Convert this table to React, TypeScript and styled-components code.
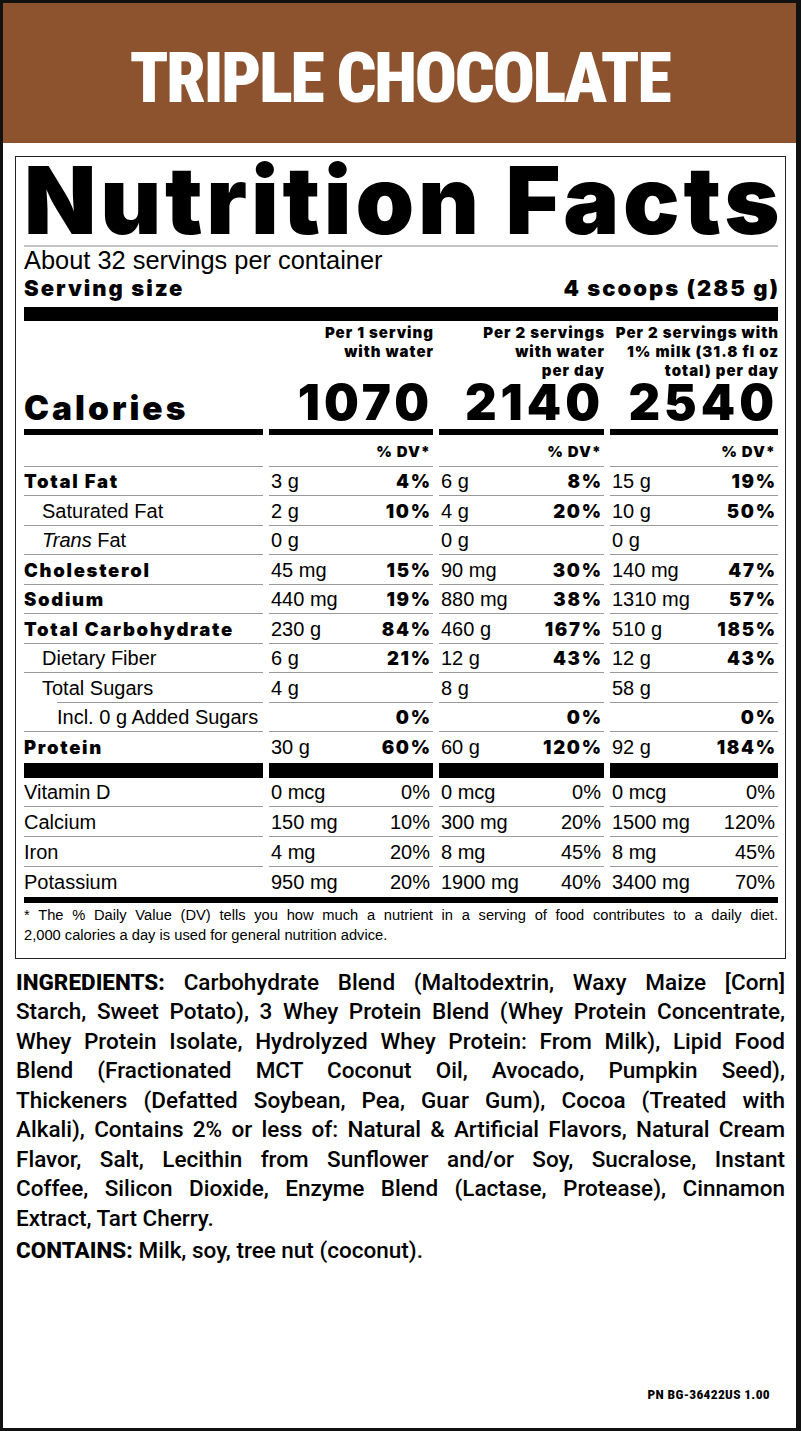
import React from "react";
import styled, { createGlobalStyle } from "styled-components";

const GlobalStyle = createGlobalStyle`
  html, body { margin: 0; padding: 0; background: #fff; }
  * { box-sizing: border-box; }
`;

const HEAVY = `"Inter", "Liberation Sans", Arial, sans-serif`;
const REG = `"Liberation Sans", Arial, sans-serif`;
const COND = `"Roboto Condensed", "Liberation Sans", Arial, sans-serif`;
const TEXT = `"Roboto", "Liberation Sans", Arial, sans-serif`;

const Page = styled.div`
  width: 801px;
  height: 1431px;
  border-style: solid;
  border-color: #111;
  border-width: 3px 5px 3px 3px;
  display: flex;
  flex-direction: column;
  font-family: ${REG};
  color: #000;
  background: #fff;
`;

const Header = styled.header`
  height: 140px;
  background: #8c532e;
  padding-top: 40px;
  text-align: center;
`;

const Title = styled.h1`
  margin: 0;
  font-family: ${COND};
  font-weight: 900;
  font-size: 70px;
  line-height: 70px;
  letter-spacing: -2.2px;
  color: #fff;
  white-space: nowrap;
`;

const Panel = styled.section`
  margin: 13px 10px 0 12px;
  border: 1px solid #222;
  padding: 0 7px 13px 8px;
`;

const BigTitle = styled.h2`
  margin: 0;
  font-family: ${HEAVY};
  font-weight: 900;
  font-size: 94px;
  line-height: 87.6px;
  letter-spacing: 3.8px;
  white-space: nowrap;
  border-bottom: 2px solid #c4c4c4;
`;

const Servings = styled.div`
  font-size: 25.4px;
  line-height: 27px;
  white-space: nowrap;
`;

const ServingSize = styled.div`
  display: flex;
  justify-content: space-between;
  font-family: ${HEAVY};
  font-weight: 900;
  font-size: 22px;
  line-height: 28.8px;
  letter-spacing: 2px;
  white-space: nowrap;
  & > span:last-child {
    margin-right: -2px;
  }
`;

const Bar = styled.div<{ $h: number; $mt?: number }>`
  height: ${(p) => p.$h}px;
  margin-top: ${(p) => p.$mt ?? 0}px;
  background: #000;
`;

const Grid = styled.div`
  display: grid;
  grid-template-columns: 239px 164px 165px 168px;
  column-gap: 6px;
`;

const SegBar = styled(Grid)<{ $h: number; $mt?: number }>`
  margin-top: ${(p) => p.$mt ?? 0}px;
  & > div {
    height: ${(p) => p.$h}px;
    background: #000;
  }
`;

const ColHeads = styled(Grid)`
  padding-top: 2px;
  font-family: ${HEAVY};
  font-weight: 900;
  font-size: 15px;
  line-height: 19.2px;
  letter-spacing: 1px;
`;

const ColHead = styled.div`
  text-align: right;
  white-space: nowrap;
  margin-right: -1px;
`;

const CaloriesRow = styled(Grid)`
  align-items: baseline;
`;

const CalLabel = styled.div`
  font-family: ${HEAVY};
  font-weight: 900;
  font-size: 33.5px;
  line-height: 30px;
  letter-spacing: 3px;
  white-space: nowrap;
`;

const CalValue = styled.div`
  font-family: ${HEAVY};
  font-weight: 900;
  font-size: 49px;
  line-height: 44px;
  letter-spacing: 4px;
  text-align: right;
  white-space: nowrap;
`;

const Row = styled(Grid)<{ $h: number }>`
  height: ${(p) => p.$h}px;
`;

const Cell = styled.div<{ $line?: boolean; $inset?: number; $pt: number }>`
  height: 100%;
  padding-top: ${(p) => p.$pt}px;
  line-height: 27px;
  white-space: nowrap;
  background-image: ${(p) =>
    p.$line ? "linear-gradient(#9a9a9a, #9a9a9a)" : "none"};
  background-repeat: no-repeat;
  background-position: right bottom;
  background-size: calc(100% - ${(p) => p.$inset ?? 0}px) 1px;
`;

const Label = styled(Cell)<{ $bold?: boolean; $indent?: number }>`
  padding-left: ${(p) => p.$indent ?? 0}px;
  font-family: ${(p) => (p.$bold ? HEAVY : REG)};
  font-weight: ${(p) => (p.$bold ? 900 : 400)};
  font-size: ${(p) => (p.$bold ? 18.5 : 20)}px;
  letter-spacing: ${(p) => (p.$bold ? 1.7 : 0)}px;
`;

const ValueCell = styled(Cell)`
  display: flex;
  justify-content: space-between;
  align-items: baseline;
  padding-left: 2px;
  padding-right: 3px;
`;

const DvHead = styled(Cell)`
  text-align: right;
  padding-right: 2px;
  line-height: 28px;
  font-family: ${HEAVY};
  font-weight: 900;
  font-size: 15px;
  letter-spacing: 1px;
`;

const Amount = styled.span`
  font-family: ${REG};
  font-size: 20px;
`;

const Pct = styled.span<{ $bold?: boolean }>`
  font-family: ${(p) => (p.$bold ? HEAVY : REG)};
  font-weight: ${(p) => (p.$bold ? 900 : 400)};
  font-size: ${(p) => (p.$bold ? 18.5 : 20)}px;
  letter-spacing: ${(p) => (p.$bold ? 1.7 : 0)}px;
  margin-right: ${(p) => (p.$bold ? -1.7 : 0)}px;
`;

const Footnote = styled.div`
  padding-top: 2px;
  font-size: 14.7px;
  line-height: 20px;
`;

const FootLine = styled.p<{ $justify?: boolean }>`
  margin: 0;
  white-space: nowrap;
  text-align: ${(p) => (p.$justify ? "justify" : "left")};
  text-align-last: ${(p) => (p.$justify ? "justify" : "left")};
`;

const Ingredients = styled.div`
  margin: 8.4px 11px 0 13px;
  font-family: ${TEXT};
  font-weight: 500;
  font-stretch: 92%;
  font-size: 22.5px;
  line-height: 29.5px;
`;

const IngLine = styled.div<{ $last?: boolean; $mt?: number }>`
  white-space: nowrap;
  text-align: justify;
  text-align-last: ${(p) => (p.$last ? "left" : "justify")};
  margin-top: ${(p) => p.$mt ?? 0}px;
`;

const Strong = styled.strong`
  font-weight: 800;
  font-stretch: 100%;
`;

const PartNo = styled.div`
  margin-top: auto;
  align-self: flex-end;
  margin-right: 26px;
  margin-bottom: 26px;
  font-family: ${COND};
  font-weight: 800;
  font-size: 13.5px;
  line-height: 16px;
  letter-spacing: 0.3px;
`;

type Nutrient = {
  label: React.ReactNode;
  bold?: boolean;
  indent?: number;
  inset?: number;
  vals: [string, string][];
};

const nutrients: Nutrient[] = [
  { label: "Total Fat", bold: true, vals: [["3 g", "4%"], ["6 g", "8%"], ["15 g", "19%"]] },
  { label: "Saturated Fat", indent: 18, vals: [["2 g", "10%"], ["4 g", "20%"], ["10 g", "50%"]] },
  {
    label: (
      <>
        <i>Trans</i> Fat
      </>
    ),
    indent: 18,
    vals: [["0 g", ""], ["0 g", ""], ["0 g", ""]],
  },
  { label: "Cholesterol", bold: true, vals: [["45 mg", "15%"], ["90 mg", "30%"], ["140 mg", "47%"]] },
  { label: "Sodium", bold: true, vals: [["440 mg", "19%"], ["880 mg", "38%"], ["1310 mg", "57%"]] },
  { label: "Total Carbohydrate", bold: true, vals: [["230 g", "84%"], ["460 g", "167%"], ["510 g", "185%"]] },
  { label: "Dietary Fiber", indent: 18, vals: [["6 g", "21%"], ["12 g", "43%"], ["12 g", "43%"]] },
  { label: "Total Sugars", indent: 18, inset: 33, vals: [["4 g", ""], ["8 g", ""], ["58 g", ""]] },
  { label: "Incl. 0 g Added Sugars", indent: 33, vals: [["", "0%"], ["", "0%"], ["", "0%"]] },
  { label: "Protein", bold: true, vals: [["30 g", "60%"], ["60 g", "120%"], ["92 g", "184%"]] },
];

const vitamins: { label: string; vals: [string, string][] }[] = [
  { label: "Vitamin D", vals: [["0 mcg", "0%"], ["0 mcg", "0%"], ["0 mcg", "0%"]] },
  { label: "Calcium", vals: [["150 mg", "10%"], ["300 mg", "20%"], ["1500 mg", "120%"]] },
  { label: "Iron", vals: [["4 mg", "20%"], ["8 mg", "45%"], ["8 mg", "45%"]] },
  { label: "Potassium", vals: [["950 mg", "20%"], ["1900 mg", "40%"], ["3400 mg", "70%"]] },
];

const ingredientLines: React.ReactNode[] = [
  <>
    <Strong>INGREDIENTS:</Strong> Carbohydrate Blend (Maltodextrin, Waxy Maize [Corn]
  </>,
  "Starch, Sweet Potato), 3 Whey Protein Blend (Whey Protein Concentrate,",
  "Whey Protein Isolate, Hydrolyzed Whey Protein: From Milk), Lipid Food",
  "Blend (Fractionated MCT Coconut Oil, Avocado, Pumpkin Seed),",
  "Thickeners (Defatted Soybean, Pea, Guar Gum), Cocoa (Treated with",
  "Alkali), Contains 2% or less of: Natural & Artificial Flavors, Natural Cream",
  "Flavor, Salt, Lecithin from Sunflower and/or Soy, Sucralose, Instant",
  "Coffee, Silicon Dioxide, Enzyme Blend (Lactase, Protease), Cinnamon",
  "Extract, Tart Cherry.",
];

export default function App() {
  return (
    <Page>
      <GlobalStyle />
      <Header>
        <Title>TRIPLE CHOCOLATE</Title>
      </Header>

      <Panel>
        <BigTitle>Nutrition Facts</BigTitle>
        <Servings>About 32 servings per container</Servings>
        <ServingSize>
          <span>Serving size</span>
          <span>4 scoops (285 g)</span>
        </ServingSize>
        <Bar $h={14} $mt={4.6} />

        <ColHeads>
          <div />
          <ColHead>
            Per 1 serving
            <br />
            with water
          </ColHead>
          <ColHead>
            Per 2 servings
            <br />
            with water
            <br />
            per day
          </ColHead>
          <ColHead>
            Per 2 servings with
            <br />
            1% milk (31.8 fl oz
            <br />
            total) per day
          </ColHead>
        </ColHeads>

        <CaloriesRow>
          <CalLabel>Calories</CalLabel>
          <CalValue>1070</CalValue>
          <CalValue>2140</CalValue>
          <CalValue>2540</CalValue>
        </CaloriesRow>
        <SegBar $h={6} $mt={4}>
          <div />
          <div />
          <div />
          <div />
        </SegBar>

        <Row $h={32.4}>
          <Cell $line $pt={3} />
          <DvHead $line $pt={3}>% DV*</DvHead>
          <DvHead $line $pt={3}>% DV*</DvHead>
          <DvHead $line $pt={3}>% DV*</DvHead>
        </Row>

        {nutrients.map((n, i) => {
          const line = i < nutrients.length - 1;
          return (
            <Row $h={29.5} key={i}>
              <Label $line={line} $inset={n.inset} $pt={1.5} $bold={n.bold} $indent={n.indent}>
                {n.label}
              </Label>
              {n.vals.map(([amt, pct], j) => (
                <ValueCell $line={line} $pt={1.5} key={j}>
                  <Amount>{amt}</Amount>
                  <Pct $bold>{pct}</Pct>
                </ValueCell>
              ))}
            </Row>
          );
        })}
        <SegBar $h={14.6} $mt={1}>
          <div />
          <div />
          <div />
          <div />
        </SegBar>

        {vitamins.map((v, i) => {
          const line = i < vitamins.length - 1;
          return (
            <Row $h={29.8} key={i}>
              <Label $line={line} $pt={1.8}>
                {v.label}
              </Label>
              {v.vals.map(([amt, pct], j) => (
                <ValueCell $line={line} $pt={1.8} key={j}>
                  <Amount>{amt}</Amount>
                  <Pct>{pct}</Pct>
                </ValueCell>
              ))}
            </Row>
          );
        })}
        <Bar $h={6} $mt={0.5} />

        <Footnote>
          <FootLine $justify>
            * The % Daily Value (DV) tells you how much a nutrient in a serving of food contributes to a daily diet.
          </FootLine>
          <FootLine>2,000 calories a day is used for general nutrition advice.</FootLine>
        </Footnote>
      </Panel>

      <Ingredients>
        {ingredientLines.map((l, i) => (
          <IngLine key={i} $last={i === ingredientLines.length - 1}>
            {l}
          </IngLine>
        ))}
        <IngLine $last $mt={3}>
          <Strong>CONTAINS:</Strong> Milk, soy, tree nut (coconut).
        </IngLine>
      </Ingredients>

      <PartNo>PN BG-36422US 1.00</PartNo>
    </Page>
  );
}
